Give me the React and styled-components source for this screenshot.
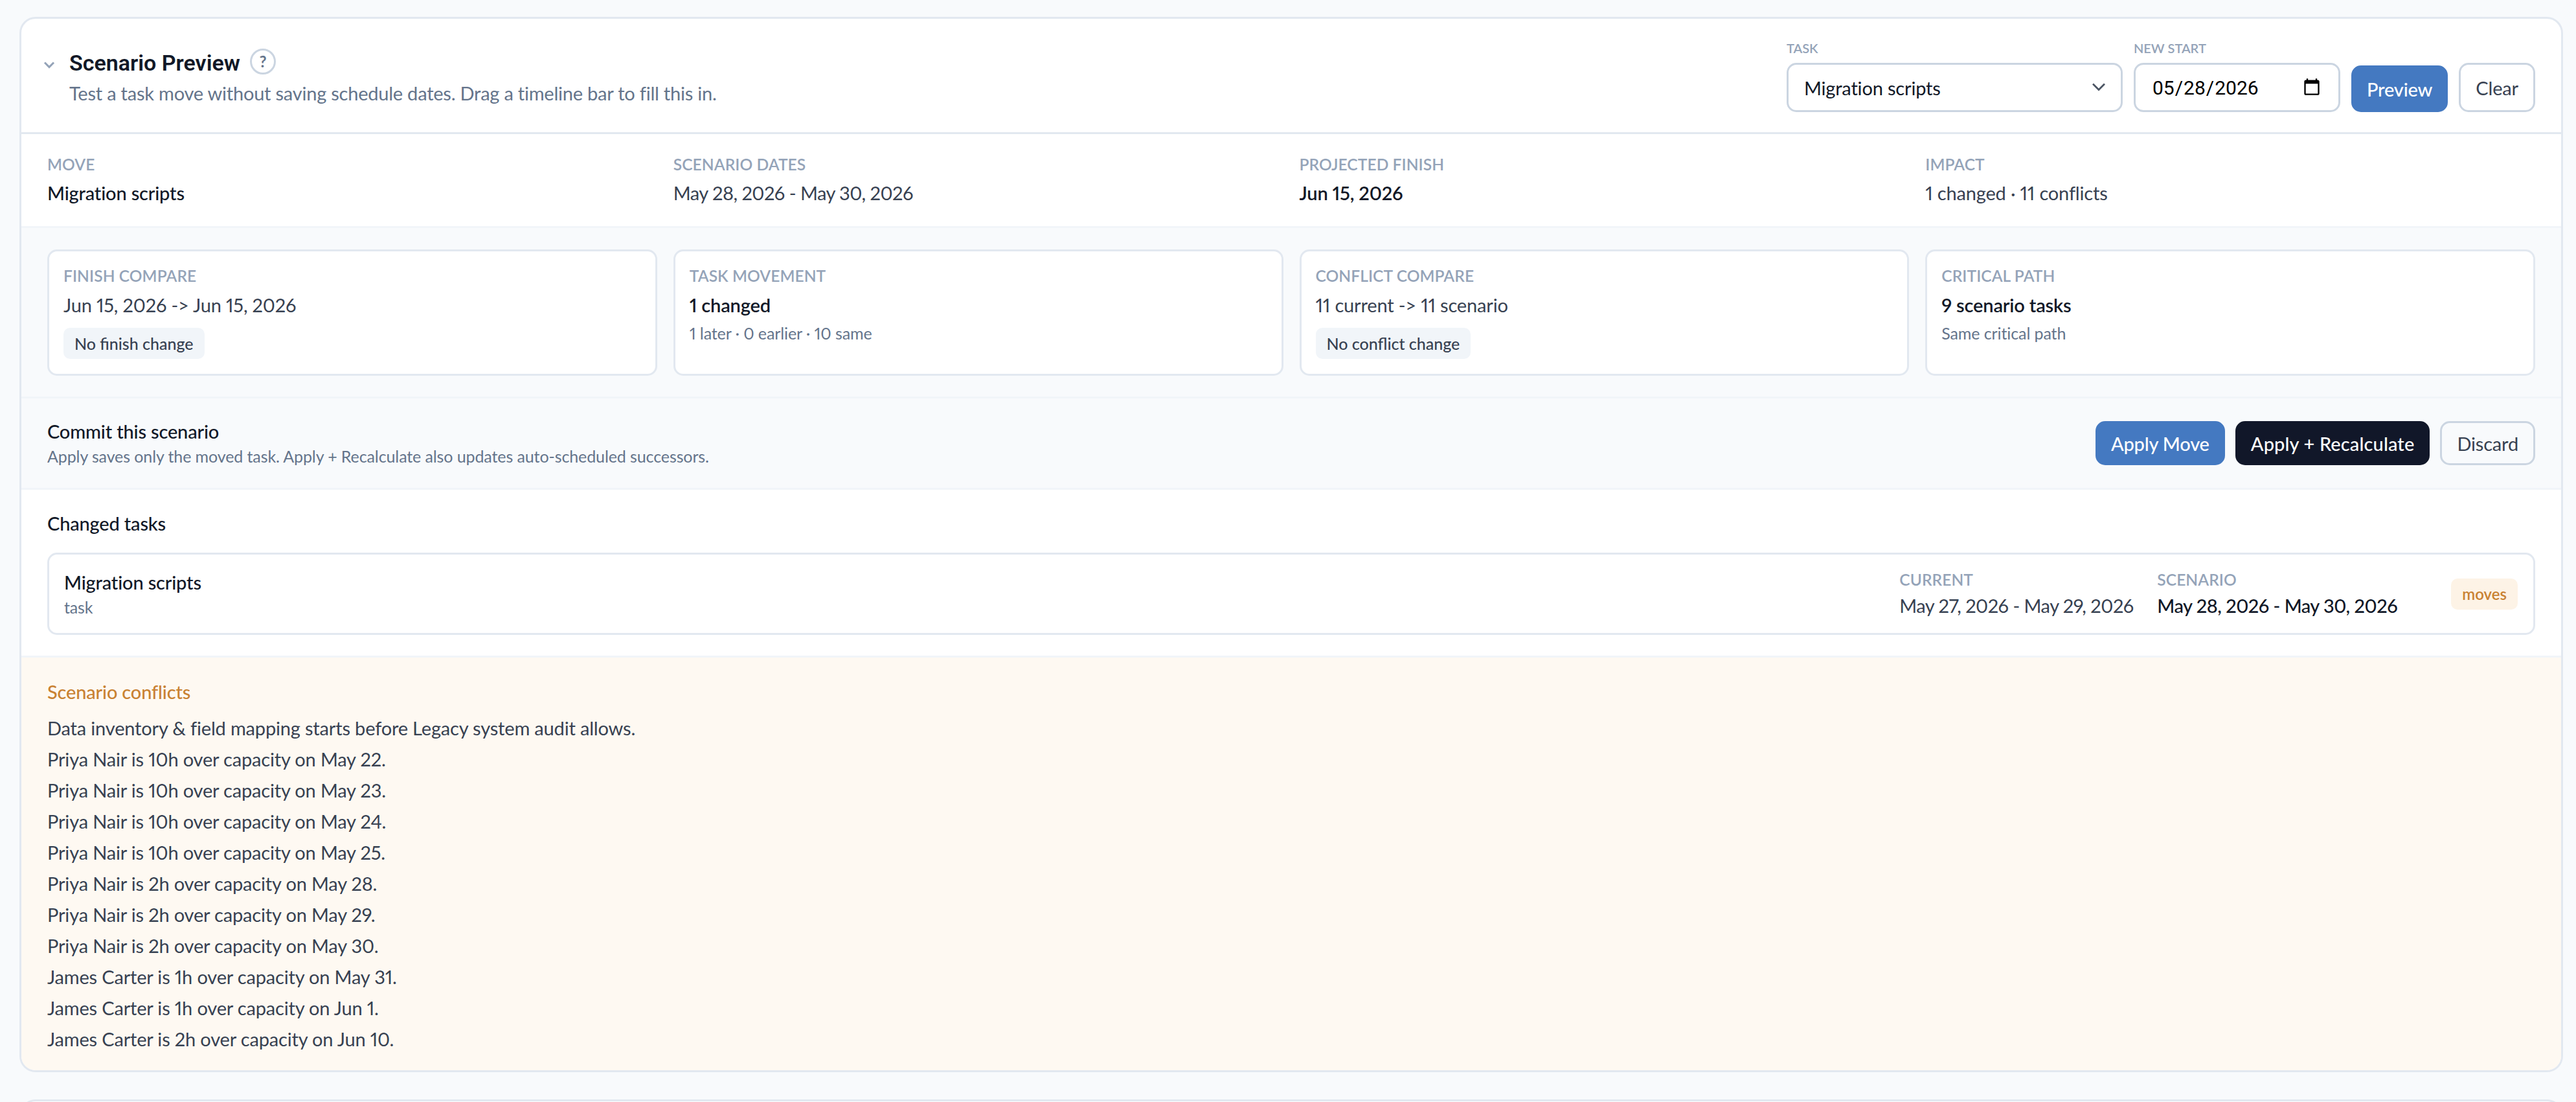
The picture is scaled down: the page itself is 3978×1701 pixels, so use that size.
import React from "react";
import styled, { createGlobalStyle } from "styled-components";

const Global = createGlobalStyle`
  * { box-sizing: border-box; }
  html, body { margin: 0; padding: 0; background: #f8fafc; }
  body {
    font-family: "Lato", "Liberation Sans", sans-serif;
    font-variant-numeric: proportional-nums;
    letter-spacing: -0.17px;
    width: 3978px;
    height: 1701px;
    overflow: hidden;
    color: #111827;
  }
`;

const Page = styled.main`
  padding: 26px 20px 0 30px;
  display: flex;
  flex-direction: column;
  gap: 42px;
`;
const Panel = styled.section`
  background: #fff;
  border: 3px solid #e2e8f0;
  border-radius: 25px;
  overflow: hidden;
`;
const NextPanel = styled.div`
  height: 40px;
  background: #fff;
  border: 3px solid #e2e8f0;
  border-radius: 25px 25px 0 0;
`;
const Header = styled.header`
  height: 178px;
  padding: 0 40px 0 29px;
  display: flex;
  align-items: center;
  justify-content: space-between;
  border-bottom: 3px solid #e2e8f0;
`;
const TitleBlock = styled.div`
  display: flex;
  align-items: flex-start;
  gap: 17px;
`;
const Chevron = styled.svg`
  width: 28px;
  height: 28px;
  margin-top: 16px;
  color: #94a3b8;
`;
const TitleRow = styled.div`
  display: flex;
  align-items: center;
  gap: 15px;
`;
const Title = styled.h2`
  margin: 0;
  padding-top: 4px;
  font: 600 34px/46px "Roboto", sans-serif;
  letter-spacing: 0;
  color: #111827;
`;
const Help = styled.span`
  width: 40px;
  height: 40px;
  border-radius: 50%;
  border: 3px solid #cbd5e1;
  display: flex;
  align-items: center;
  justify-content: center;
  font-size: 24px;
  font-weight: 700;
  color: #64748b;
`;
const Sub = styled.p`
  margin: 4px 0 0;
  font-size: 29px;
  line-height: 40px;
  letter-spacing: -0.22px;
  color: #64748b;
`;
const Controls = styled.div`
  display: flex;
  align-items: flex-end;
  gap: 17px;
`;
const Field = styled.label`
  display: flex;
  flex-direction: column;
  gap: 9px;
`;
const TinyLabel = styled.span`
  font-size: 20px;
  line-height: 28px;
  letter-spacing: 0;
  color: #94a3b8;
  text-transform: uppercase;
  font-weight: 600;
`;
const SelectWrap = styled.div`
  position: relative;
  width: 519px;
  height: 76px;
`;
const Select = styled.select`
  appearance: none;
  width: 100%;
  height: 100%;
  border: 3px solid #cbd5e1;
  border-radius: 15px;
  padding: 0 22px 0 24px;
  background: #fff;
  font: 400 29px "Lato", sans-serif;
  letter-spacing: -0.17px;
  color: #111827;
`;
const SelectChevron = styled.svg`
  position: absolute;
  top: 19px;
  right: 19px;
  width: 36px;
  height: 36px;
  color: #4b5563;
  pointer-events: none;
`;
const DateInput = styled.input`
  width: 319px;
  height: 76px;
  border: 3px solid #cbd5e1;
  border-radius: 15px;
  padding: 0 24px 0 25px;
  background: #fff;
  font: 400 30px "Roboto", sans-serif;
  letter-spacing: 0;
  color: #000;
`;
const Btn = styled.button`
  height: ${(p) => p.$h || 76}px;
  padding: 0 ${(p) => (p.$variant === "ghost" ? 23 : 24)}px;
  border-radius: 15px;
  font: ${(p) => (p.$variant === "ghost" ? 400 : 500)} 29px "Lato", sans-serif;
  font-variant-numeric: proportional-nums;
  letter-spacing: ${(p) => (p.$variant === "dark" ? "0.13px" : "-0.17px")};
  white-space: nowrap;
  border: ${(p) => (p.$variant === "ghost" ? "3px solid #cbd5e1" : "none")};
  background: ${(p) =>
    p.$variant === "blue" ? "#4479c1" : p.$variant === "dark" ? "#111729" : "transparent"};
  color: ${(p) => (p.$variant === "ghost" ? "#374151" : "#fff")};
`;
const Summary = styled.div`
  display: grid;
  grid-template-columns: repeat(4, 1fr);
  column-gap: 25px;
  padding: 30px 40px 0;
  height: 142px;
`;
const Stat = styled.div`
  display: flex;
  flex-direction: column;
  gap: 7px;
`;
const Label = styled.span`
  font-size: 24.5px;
  line-height: 34px;
  letter-spacing: 0.1px;
  color: #94a3b8;
  text-transform: uppercase;
  font-weight: 600;
`;
const Value = styled.span`
  font-size: 29px;
  line-height: 40px;
  letter-spacing: ${(p) => (p.$dates ? "-0.5px" : "-0.17px")};
  color: ${(p) => (p.$strong ? "#111827" : "#374151")};
  font-weight: ${(p) => (p.$bold ? 600 : p.$strong ? 500 : 400)};
`;
const CompareSection = styled.div`
  background: #f8fafc;
  border-top: 3px solid #f1f5f9;
  border-bottom: 3px solid #f1f5f9;
  padding: 33px 40px 32px;
  display: grid;
  grid-template-columns: repeat(4, 1fr);
  gap: 25px;
`;
const CompareCard = styled.div`
  height: 195px;
  background: #fff;
  border: 3px solid #e2e8f0;
  border-radius: 15px;
  padding: 21px 22px 0;
  display: flex;
  flex-direction: column;
  align-items: flex-start;
`;
const CardValue = styled(Value)`
  margin-top: 8px;
`;
const Chip = styled.span`
  margin-top: 15px;
  padding: 0 17px;
  height: 48px;
  display: inline-flex;
  align-items: center;
  border-radius: 10px;
  background: #f1f5f9;
  font-size: 25px;
  letter-spacing: 0;
  font-weight: 500;
  color: #374151;
`;
const Note = styled.span`
  margin-top: 5px;
  font-size: 25px;
  line-height: 36px;
  letter-spacing: -0.1px;
  color: #64748b;
`;
const Commit = styled.div`
  background: #f8fafc;
  border-bottom: 3px solid #f1f5f9;
  padding: 0 40px;
  height: 141px;
  display: flex;
  align-items: center;
  justify-content: space-between;
`;
const CommitTitle = styled.div`
  font-size: 29px;
  line-height: 40px;
  font-weight: 500;
  color: #111827;
`;
const CommitNote = styled.div`
  font-size: 25px;
  line-height: 36px;
  letter-spacing: -0.1px;
  color: #64748b;
`;
const Actions = styled.div`
  display: flex;
  gap: 16px;
`;
const Changes = styled.div`
  padding: 32px 40px;
  border-bottom: 3px solid #f1f5f9;
`;
const ChangesTitle = styled.div`
  font-size: 29px;
  line-height: 40px;
  font-weight: 500;
  margin-bottom: 25px;
`;
const ChangeRow = styled.div`
  height: 127px;
  border: 3px solid #e2e8f0;
  border-radius: 15px;
  padding: 0 24px 0 23px;
  display: grid;
  grid-template-columns: 1fr 398px 454px auto;
  align-items: center;
`;
const ChangeName = styled.div`
  display: flex;
  flex-direction: column;
`;
const ChangeKind = styled.span`
  font-size: 25px;
  line-height: 36px;
  color: #64748b;
`;
const ChangeCol = styled.div`
  display: flex;
  flex-direction: column;
  gap: 3px;
`;
const MovesTag = styled.span`
  padding: 0 17px;
  height: 48px;
  display: inline-flex;
  align-items: center;
  border-radius: 10px;
  background: #fdf3e6;
  color: #c98232;
  font-size: 24px;
  letter-spacing: 0;
  font-weight: 600;
`;
const Conflicts = styled.div`
  background: #fef9f2;
  padding: 33px 40px 24px;
`;
const ConflictTitle = styled.div`
  font-size: 29px;
  line-height: 40px;
  font-weight: 500;
  color: #c98232;
  margin-bottom: 12px;
`;
const ConflictLine = styled.div`
  font-size: 29px;
  line-height: 48px;
  color: #374151;
`;

const conflicts = [
  "Data inventory & field mapping starts before Legacy system audit allows.",
  "Priya Nair is 10h over capacity on May 22.",
  "Priya Nair is 10h over capacity on May 23.",
  "Priya Nair is 10h over capacity on May 24.",
  "Priya Nair is 10h over capacity on May 25.",
  "Priya Nair is 2h over capacity on May 28.",
  "Priya Nair is 2h over capacity on May 29.",
  "Priya Nair is 2h over capacity on May 30.",
  "James Carter is 1h over capacity on May 31.",
  "James Carter is 1h over capacity on Jun 1.",
  "James Carter is 2h over capacity on Jun 10.",
];

export default function App() {
  return (
    <>
      <Global />
      <Page>
        <Panel>
          <Header>
            <TitleBlock>
              <Chevron viewBox="0 0 24 24" fill="none" stroke="currentColor" strokeWidth="2.6"><path d="m6 9 6 6 6-6" /></Chevron>
              <div>
                <TitleRow>
                  <Title>Scenario Preview</Title>
                  <Help>?</Help>
                </TitleRow>
                <Sub>Test a task move without saving schedule dates. Drag a timeline bar to fill this in.</Sub>
              </div>
            </TitleBlock>
            <Controls>
              <Field>
                <TinyLabel>Task</TinyLabel>
                <SelectWrap>
                  <Select defaultValue="Migration scripts">
                    <option>Migration scripts</option>
                  </Select>
                  <SelectChevron viewBox="0 0 24 24" fill="none" stroke="currentColor" strokeWidth="1.8"><path d="m6 9 6 6 6-6" /></SelectChevron>
                </SelectWrap>
              </Field>
              <Field>
                <TinyLabel>New start</TinyLabel>
                <DateInput type="date" defaultValue="2026-05-28" />
              </Field>
              <Btn $variant="blue" $h={72}>Preview</Btn>
              <Btn $variant="ghost">Clear</Btn>
            </Controls>
          </Header>
          <Summary>
            <Stat><Label>Move</Label><Value $strong>Migration scripts</Value></Stat>
            <Stat><Label>Scenario dates</Label><Value $dates>May 28, 2026 - May 30, 2026</Value></Stat>
            <Stat><Label>Projected finish</Label><Value $strong $bold>Jun 15, 2026</Value></Stat>
            <Stat><Label>Impact</Label><Value>1 changed · 11 conflicts</Value></Stat>
          </Summary>
          <CompareSection>
            <CompareCard><Label>Finish compare</Label><CardValue>Jun 15, 2026 -&gt; Jun 15, 2026</CardValue><Chip>No finish change</Chip></CompareCard>
            <CompareCard><Label>Task movement</Label><CardValue $strong $bold>1 changed</CardValue><Note>1 later · 0 earlier · 10 same</Note></CompareCard>
            <CompareCard><Label>Conflict compare</Label><CardValue>11 current -&gt; 11 scenario</CardValue><Chip>No conflict change</Chip></CompareCard>
            <CompareCard><Label>Critical path</Label><CardValue $strong $bold>9 scenario tasks</CardValue><Note>Same critical path</Note></CompareCard>
          </CompareSection>
          <Commit>
            <div>
              <CommitTitle>Commit this scenario</CommitTitle>
              <CommitNote>Apply saves only the moved task. Apply + Recalculate also updates auto-scheduled successors.</CommitNote>
            </div>
            <Actions>
              <Btn $variant="blue" $h={68}>Apply Move</Btn>
              <Btn $variant="dark" $h={68}>Apply + Recalculate</Btn>
              <Btn $variant="ghost" $h={68}>Discard</Btn>
            </Actions>
          </Commit>
          <Changes>
            <ChangesTitle>Changed tasks</ChangesTitle>
            <ChangeRow>
              <ChangeName><Value $strong>Migration scripts</Value><ChangeKind>task</ChangeKind></ChangeName>
              <ChangeCol><Label>Current</Label><Value $dates>May 27, 2026 - May 29, 2026</Value></ChangeCol>
              <ChangeCol><Label>Scenario</Label><Value $strong $dates>May 28, 2026 - May 30, 2026</Value></ChangeCol>
              <MovesTag>moves</MovesTag>
            </ChangeRow>
          </Changes>
          <Conflicts>
            <ConflictTitle>Scenario conflicts</ConflictTitle>
            {conflicts.map((c) => <ConflictLine key={c}>{c}</ConflictLine>)}
          </Conflicts>
        </Panel>
        <NextPanel />
      </Page>
    </>
  );
}
